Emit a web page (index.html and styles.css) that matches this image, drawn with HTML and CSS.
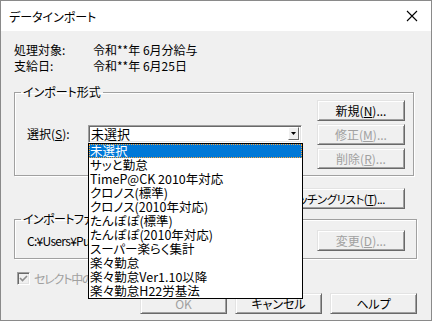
FILE: index.html
```html
<!DOCTYPE html>
<html>
<head>
    <title>データインポート</title>
    <link rel="stylesheet" href="styles.css">
</head>
<body>
    <div class="window">
        <div class="titlebar">
            <span class="title">データインポート</span>
            <svg class="close" width="12" height="12" viewBox="0 0 12 12">
                <path d="M1 1 L11 11 M11 1 L1 11" stroke="#000" stroke-width="1.1" fill="none"/>
            </svg>
        </div>

        <div class="content">
            <div class="info-row">
                <span class="info-label">処理対象:</span>
                <span>令和**年 6月分給与</span>
            </div>
            <div class="info-row">
                <span class="info-label">支給日:</span>
                <span>令和**年 6月25日</span>
            </div>

            <fieldset class="group group-format">
                <legend>インポート形式</legend>
                <div class="format-body">
                    <div class="select-row">
                        <label class="select-label">選択(<u>S</u>):</label>
                        <div class="combo">
                            <span>未選択</span>
                            <span class="combo-btn">
                                <svg width="5" height="3" viewBox="0 0 5 3"><path d="M0 0 H5 L2.5 3 Z" fill="#000"/></svg>
                            </span>
                        </div>
                    </div>
                    <div class="side-buttons">
                        <button class="btn">新規(<u>N</u>)...</button>
                        <button class="btn" disabled>修正(<u>M</u>)...</button>
                        <button class="btn" disabled>削除(<u>R</u>)...</button>
                    </div>
                </div>
            </fieldset>

            <!-- 左側はドロップダウンの下に隠れている -->
            <div class="matching-row">
                <button class="btn btn-wide">ッチングリスト(<u>T</u>)...</button>
            </div>

            <fieldset class="group group-file">
                <legend class="narrow">インポートファ</legend>
                <div class="file-body">
                    <span class="path">C:¥Users¥Pu</span>
                    <button class="btn" disabled>変更(<u>D</u>)...</button>
                </div>
            </fieldset>

            <div class="check-row">
                <span class="checkbox">
                    <svg width="9" height="9" viewBox="0 0 9 9"><path d="M1 4 L3.5 6.5 L8 2" stroke="#8d8d8d" stroke-width="1.6" fill="none"/></svg>
                </span>
                <span class="check-label">セレクト中の</span>
            </div>

            <div class="dialog-buttons">
                <button class="btn" disabled>OK</button>
                <button class="btn">キャンセル</button>
                <button class="btn">ヘルプ</button>
            </div>
        </div>

        <ul class="dropdown">
            <li class="selected">未選択</li>
            <li>サッと勤怠</li>
            <li>TimeP@CK 2010年対応</li>
            <li>クロノス(標準)</li>
            <li>クロノス(2010年対応)</li>
            <li>たんぽぽ(標準)</li>
            <li>たんぽぽ(2010年対応)</li>
            <li>スーパー楽らく集計</li>
            <li>楽々勤怠</li>
            <li>楽々勤怠Ver1.10以降</li>
            <li>楽々勤怠H22労基法</li>
        </ul>
    </div>
</body>
</html>
```

FILE: styles.css
```css
body {
    margin: 0;
    font-family: "Noto Sans CJK JP", sans-serif;
    font-size: 12px;
    font-feature-settings: "palt";
    color: #000;
    background: #fff;
}

.window {
    position: relative;
    width: 432px;
    height: 321px;
    box-sizing: border-box;
    border: 1px solid #8a8a8a;
    background: #f0f0f0;
    overflow: hidden;
}

.titlebar {
    height: 30px;
    background: #fff;
    display: flex;
    align-items: center;
    justify-content: space-between;
    padding: 0 13px 0 8px;
}

.title {
    font-size: 12px;
}

.content {
    padding: 11px 14px 0 13px;
}

.info-row {
    display: flex;
    line-height: 16px;
    height: 16px;
}

.info-label {
    width: 79px;
}

/* グループボックス */
.group {
    margin: 11px 0 0 0;
    padding: 0;
    border: 1px solid #a0a0a0;
    box-shadow: inset 1px 1px #fff, 1px 1px #fff;
    box-sizing: border-box;
    min-width: 0;
}

.group legend {
    padding: 0 2px;
    margin-left: 6px;
    line-height: 14px;
}

.group legend.narrow {
    letter-spacing: -0.6px;
}

.group-format {
    width: 400px;
}

.format-body {
    display: flex;
    align-items: center;
    justify-content: space-between;
    padding: 1px 8px 6px 12px;
}

.select-row {
    display: flex;
    align-items: center;
    margin-top: -2px;
}

.select-label {
    width: 61px;
}

.combo {
    width: 214px;
    height: 18px;
    box-sizing: border-box;
    background: #fff;
    border: 1px solid;
    border-color: #a0a0a0 #fff #fff #a0a0a0;
    box-shadow: inset 1px 1px #696969, inset -1px -1px #e3e3e3;
    display: flex;
    align-items: center;
    justify-content: space-between;
    padding: 0 2px 0 2px;
    line-height: 14px;
    font-size: 13px;
}

.combo-btn {
    width: 11px;
    height: 13px;
    box-sizing: border-box;
    border: 1px solid;
    border-color: #fff #696969 #696969 #fff;
    background: #f0f0f0;
    display: flex;
    align-items: center;
    justify-content: center;
}

.side-buttons {
    display: flex;
    flex-direction: column;
    gap: 3px;
}

/* ボタン */
.btn {
    width: 88px;
    height: 21px;
    box-sizing: border-box;
    font-family: inherit;
    font-size: 12px;
    font-feature-settings: "palt";
    line-height: 14px;
    color: #000;
    background: #f0f0f0;
    border: 1px solid;
    border-color: #e3e3e3 #696969 #696969 #e3e3e3;
    box-shadow: inset 1px 1px #fff, inset -1px -1px #a0a0a0;
    padding: 0;
    cursor: pointer;
}

.btn:disabled {
    color: #a0a0a0;
    cursor: default;
}

.btn-wide {
    width: 134px;
    text-align: right;
    padding-right: 19px;
    font-size: 11.5px;
    letter-spacing: -0.5px;
}

.matching-row {
    display: flex;
    justify-content: flex-end;
    margin-top: 12px;
    padding-right: 12px;
}

.group-file {
    margin-top: 3px;
    width: 403px;
}

.file-body {
    display: flex;
    align-items: center;
    justify-content: space-between;
    padding: 4px 11px 7px 12px;
}

.path {
    letter-spacing: -0.7px;
    white-space: nowrap;
}

.check-row {
    display: flex;
    align-items: center;
    height: 16px;
    margin-top: 11px;
    padding-left: 3px;
    color: #a0a0a0;
}

.check-label {
    letter-spacing: -1.2px;
}

.checkbox {
    width: 13px;
    height: 13px;
    box-sizing: border-box;
    border: 1px solid;
    border-color: #a0a0a0 #fff #fff #a0a0a0;
    box-shadow: inset 1px 1px #696969, inset -1px -1px #e3e3e3;
    background: #f0f0f0;
    display: flex;
    align-items: center;
    justify-content: center;
    margin-right: 4px;
}

.dialog-buttons {
    display: flex;
    justify-content: flex-end;
    gap: 8px;
    margin-top: 7px;
}

.dialog-buttons .btn {
    width: 87px;
}

/* ドロップダウンリスト */
.dropdown {
    position: absolute;
    left: 87px;
    top: 142px;
    width: 215px;
    margin: 0;
    padding: 0;
    list-style: none;
    background: #fff;
    border: 1px solid #000;
    box-sizing: border-box;
    font-size: 12.5px;
}

.dropdown li {
    height: 14px;
    line-height: 14px;
    padding-left: 1px;
    white-space: nowrap;
}

.dropdown li.selected {
    background: #0078d7;
    color: #fff;
    outline: 1px dotted #f7a541;
    outline-offset: -1px;
}
```
